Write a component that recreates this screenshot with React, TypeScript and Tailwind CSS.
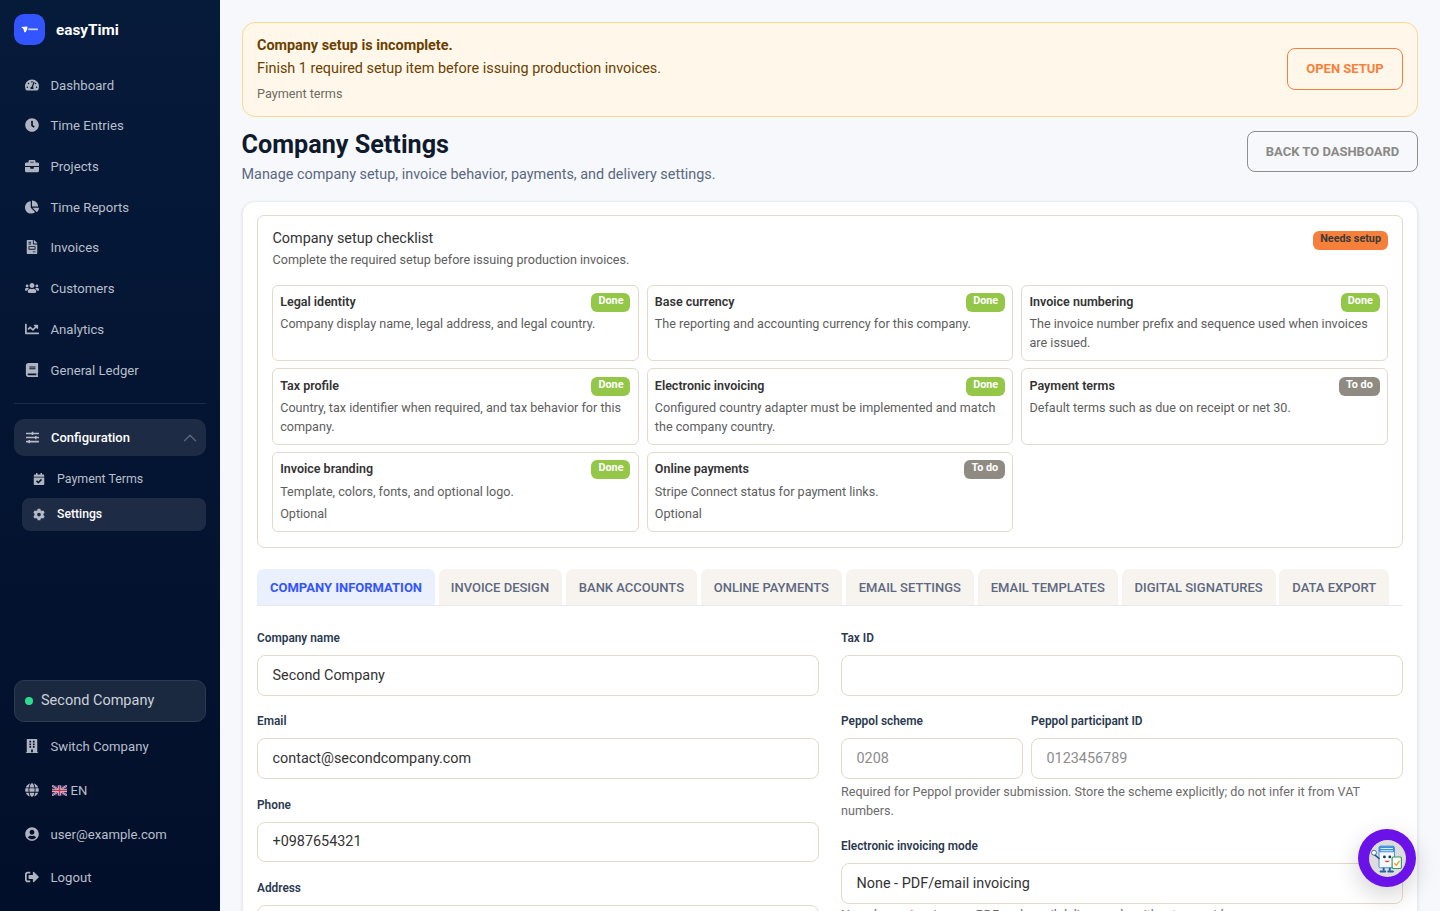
import type { ReactNode } from "react";
import {
  FaBook,
  FaBriefcase,
  FaBuilding,
  FaCalendarCheck,
  FaChartLine,
  FaChartPie,
  FaClock,
  FaCog,
  FaFileInvoice,
  FaGlobe,
  FaSignOutAlt,
  FaSlidersH,
  FaTachometerAlt,
  FaUserCircle,
  FaUsers,
} from "react-icons/fa";
import { ChevronUp } from "lucide-react";

const nav = [
  { label: "Dashboard", icon: <FaTachometerAlt />, h: "h-[40px]" },
  { label: "Time Entries", icon: <FaClock />, h: "h-[40px]" },
  { label: "Projects", icon: <FaBriefcase />, h: "h-[41px]" },
  { label: "Time Reports", icon: <FaChartPie />, h: "h-[41px]" },
  { label: "Invoices", icon: <FaFileInvoice />, h: "h-[40px]" },
  { label: "Customers", icon: <FaUsers />, h: "h-[41px]" },
  { label: "Analytics", icon: <FaChartLine />, h: "h-[41px]" },
  { label: "General Ledger", icon: <FaBook />, h: "h-[41px]" },
];

const checklist = [
  { title: "Legal identity", text: "Company display name, legal address, and legal country.", done: true },
  { title: "Base currency", text: "The reporting and accounting currency for this company.", done: true },
  { title: "Invoice numbering", text: "The invoice number prefix and sequence used when invoices are issued.", done: true },
  { title: "Tax profile", text: "Country, tax identifier when required, and tax behavior for this company.", done: true },
  { title: "Electronic invoicing", text: "Configured country adapter must be implemented and match the company country.", done: true },
  { title: "Payment terms", text: "Default terms such as due on receipt or net 30.", done: false },
  { title: "Invoice branding", text: "Template, colors, fonts, and optional logo.", done: true, optional: true },
  { title: "Online payments", text: "Stripe Connect status for payment links.", done: false, optional: true },
];

const tabs = [
  "Company Information",
  "Invoice Design",
  "Bank Accounts",
  "Online Payments",
  "Email Settings",
  "Email Templates",
  "Digital Signatures",
  "Data Export",
];

function NavRow({ icon, children, h }: { icon: ReactNode; children: ReactNode; h: string }) {
  return (
    <div className={`flex items-center pl-[25px] text-[13.15px] text-[#b9bfca] ${h}`}>
      <span className="w-[14px] mr-[11.5px] flex justify-center text-[14px] shrink-0 text-[#aeb4c0] -mt-[2px]">{icon}</span>
      {children}
    </div>
  );
}

function UkFlag() {
  return (
    <svg viewBox="0 0 60 40" className="w-[15px] h-[11px] mr-[4px] ml-[1px] -mt-[1px] shrink-0">
      <rect width="60" height="40" fill="#2a3a7a" />
      <path d="M0 0L60 40M60 0L0 40" stroke="#d8dbe6" strokeWidth="7" />
      <path d="M0 0L60 40M60 0L0 40" stroke="#c8324a" strokeWidth="3" />
      <path d="M30 0V40M0 20H60" stroke="#d8dbe6" strokeWidth="11" />
      <path d="M30 0V40M0 20H60" stroke="#c8324a" strokeWidth="6" />
    </svg>
  );
}

function Sidebar() {
  return (
    <aside className="w-[220px] shrink-0 h-full flex flex-col bg-gradient-to-b from-[#061a3a] to-[#020f2a] px-[14px]">
      <div className="flex gap-[11px] pt-[14px] h-[66px] items-start">
        <div className="w-[31px] h-[31px] rounded-[10px] bg-[#3355ff] flex items-center justify-center">
          <svg viewBox="0 0 20 8" className="w-[18px] h-[7px]">
            <path d="M0 1L7 .5V3L5 7H3.5L2.5 3.5Z" fill="#fff" />
            <rect x="8" y="2.8" width="11" height="2" fill="#c9d4ff" />
          </svg>
        </div>
        <span className="text-[15.3px] font-bold text-white leading-[33px]">easyTimi</span>
      </div>
      <nav className="-mx-[14px]">
        {nav.map((n) => (
          <NavRow key={n.label} icon={n.icon} h={n.h}>
            {n.label}
          </NavRow>
        ))}
      </nav>
      <div className="border-t border-[#1c2c48] mt-[12px]" />
      <div className="mt-[15px] h-[37px] rounded-[10px] bg-[#1e2b45] flex items-center pl-[12px] pr-[5px] text-[13px] font-medium text-white">
        <FaSlidersH className="text-[13px] text-[#b4bac6] w-[13px] mr-[12px]" />
        <span className="flex-1">Configuration</span>
        <ChevronUp size={22} strokeWidth={1.5} className="text-[#5a6579]" />
      </div>
      <div className="mt-[5px] ml-[8px] flex flex-col">
        <div className="h-[37px] flex items-center pl-[11px] text-[12.4px] text-[#b9bfca]">
          <FaCalendarCheck className="text-[12px] w-[12px] mr-[12px] text-[#aeb4c0] -mt-[2px]" />
          Payment Terms
        </div>
        <div className="h-[33px] rounded-[8px] bg-[#1e2b45] flex items-center pl-[11px] text-[12.2px] font-medium text-white">
          <FaCog className="text-[13px] w-[12px] mr-[12px] text-[#b4bac6]" />
          Settings
        </div>
      </div>
      <div className="flex-1" />
      <div className="h-[42px] rounded-[10px] bg-[#1a2840] border border-[#2d3a50] flex items-center pl-[10px] text-[14.5px] text-[#ccd1da]">
        <span className="w-[8px] h-[8px] rounded-full bg-[#2fdc8e] mr-[8px]" />
        Second Company
      </div>
      <div className="-mx-[14px] mt-[3px] pb-[12px]">
        <NavRow icon={<FaBuilding />} h="h-[44px]">
          Switch Company
        </NavRow>
        <NavRow icon={<FaGlobe />} h="h-[44px]">
          <UkFlag />
          EN
        </NavRow>
        <NavRow icon={<FaUserCircle />} h="h-[44px]">
          user@example.com
        </NavRow>
        <NavRow icon={<FaSignOutAlt />} h="h-[42px]">
          Logout
        </NavRow>
      </div>
    </aside>
  );
}

function StatusBadge({ done }: { done: boolean }) {
  return (
    <span
      className={`h-[19px] rounded-[6px] px-[7px] pt-[1px] text-[10.8px] font-bold text-white leading-[14px] shrink-0 ${
        done ? "bg-[#94c748]" : "bg-[#8f8b82]"
      }`}
    >
      {done ? "Done" : "To do"}
    </span>
  );
}

function Field({
  label,
  value,
  placeholder,
}: {
  label: string;
  value?: string;
  placeholder?: string;
}) {
  return (
    <div>
      <label className="block text-[11.85px] font-semibold text-[#2a3950] leading-[14px] mb-[10px]">{label}</label>
      <input
        readOnly
        value={value ?? ""}
        placeholder={placeholder}
        className="w-full h-[40.5px] rounded-[8px] border border-[#e2dacb] bg-white px-[14.5px] text-[14.4px] text-[#333333] placeholder:text-[#8d8d8d] outline-none"
      />
    </div>
  );
}

function Mascot() {
  return (
    <svg viewBox="0 0 48 48" className="w-full h-full">
      <defs>
        <pattern id="checks" width="3" height="3" patternUnits="userSpaceOnUse">
          <rect width="3" height="3" fill="#ececec" />
          <rect width="1.5" height="1.5" fill="#cdcdcd" />
          <rect x="1.5" y="1.5" width="1.5" height="1.5" fill="#cdcdcd" />
        </pattern>
      </defs>
      <rect width="48" height="48" fill="url(#checks)" />
      <rect x="13" y="8" width="20" height="28" rx="2" fill="#f4f8ff" stroke="#1f6fc4" strokeWidth="1" />
      <rect x="13" y="8" width="20" height="8" rx="2" fill="#3b8fe0" />
      <path d="M15 11H31M15 14H31" stroke="#ffffff" strokeWidth="1.1" />
      <circle cx="20" cy="22" r="1.8" fill="#17365f" />
      <circle cx="27" cy="22" r="1.8" fill="#17365f" />
      <path d="M20 27Q23.5 31 27 27Z" fill="#d6453a" />
      <path d="M13 24L7 19" stroke="#1f4f86" strokeWidth="2" strokeLinecap="round" />
      <circle cx="6.5" cy="16.5" r="3.2" fill="#ffffff" stroke="#1f4f86" strokeWidth="1" />
      <path d="M19 36V40M27 36V40" stroke="#1f5fa8" strokeWidth="2.4" />
      <path d="M15 41H21M25 41H31" stroke="#1f5fa8" strokeWidth="2.6" strokeLinecap="round" />
      <rect x="30" y="22" width="12" height="15" rx="1.5" fill="#ffffff" stroke="#2e9c57" strokeWidth="1.5" />
      <path d="M33 30L35.5 33L39.5 27" fill="none" stroke="#ef9a2c" strokeWidth="1.8" />
    </svg>
  );
}

export default function App() {
  return (
    <div className="h-screen w-full flex overflow-hidden bg-[#f6f8fc] [font-family:Roboto,sans-serif]">
      <Sidebar />
      <main className="flex-1 min-w-0 h-full overflow-hidden px-[22px] pt-[22px]">
        <div className="h-[95px] rounded-[13px] border border-[#f9d98f] bg-[#fff8ea] flex items-start justify-between pl-[14px] pr-[14px]">
          <div className="pt-[13px]">
            <div className="text-[14.4px] font-bold text-[#6b4000] leading-[20px]">Company setup is incomplete.</div>
            <div className="text-[14.4px] text-[#6b4000] leading-[26px]">
              Finish 1 required setup item before issuing production invoices.
            </div>
            <div className="text-[12.65px] text-[#6e6a63] leading-[24px]">Payment terms</div>
          </div>
          <button className="w-[116px] h-[42px] mt-[25px] rounded-[8px] border border-[#f77f3c] text-[13px] font-bold text-[#f77f3c]">
            OPEN SETUP
          </button>
        </div>

        <div className="flex items-start justify-between mt-[14px] h-[70px]">
          <div className="-ml-[0.5px] pt-[1px]">
            <h1 className="text-[25.2px] font-bold text-[#0f1b2d] leading-[26px]">Company Settings</h1>
            <p className="text-[14.4px] text-[#5b6880] leading-[22px] mt-[6px]">
              Manage company setup, invoice behavior, payments, and delivery settings.
            </p>
          </div>
          <button className="w-[171px] h-[41px] rounded-[8px] border border-[#8f8f8a] text-[13px] font-bold text-[#8a8a84]">
            BACK TO DASHBOARD
          </button>
        </div>

        <section className="rounded-t-[13px] border border-[#e9ecf2] bg-white px-[14px] pt-[13px] shadow-sm h-[800px]">
          <div className="h-[333px] rounded-[7px] border border-[#e2dacb] px-[14px] pt-[13px]">
            <div className="flex items-start justify-between">
              <div className="pl-[0.5px]">
                <div className="text-[14.4px] text-[#333333] leading-[20px]">Company setup checklist</div>
                <div className="text-[12.6px] text-[#5e5e5e] leading-[22px]">
                  Complete the required setup before issuing production invoices.
                </div>
              </div>
              <span className="h-[19px] mt-[2px] rounded-[6px] bg-[#f77f3c] px-[7px] text-[10.8px] font-bold text-[#3a3a36] leading-[16px]">
                Needs setup
              </span>
            </div>
            <div className="grid grid-cols-3 grid-rows-[76px_76.4px_80px] gap-x-[8px] gap-y-[7.4px] mt-[14px]">
              {checklist.map((c) => (
                <div key={c.title} className="rounded-[6px] border border-[#e2dacb] pl-[7.2px] pr-[7.2px] pt-[7.2px]">
                  <div className="flex items-start justify-between h-[19px]">
                    <span className="text-[12.5px] font-semibold text-[#333333] leading-[18px]">{c.title}</span>
                    <StatusBadge done={c.done} />
                  </div>
                  <div className="text-[12.6px] text-[#5e5e5e] leading-[19px] mt-[2.2px]">{c.text}</div>
                  {c.optional && <div className="text-[12.6px] text-[#5e5e5e] leading-[19px] mt-[3px]">Optional</div>}
                </div>
              ))}
            </div>
          </div>

          <div className="flex gap-[3.7px] mt-[21px] border-b border-[#e6e9ef] h-[37px]">
            {tabs.map((t, i) => (
              <div
                key={t}
                className={`h-[36px] rounded-t-[7px] flex items-center pt-[2px] pr-[13px] text-[13px] whitespace-nowrap ${
                  i === 0
                    ? "bg-[#ebf0fe] text-[#3355ff] font-bold"
                    : "bg-[#f7f4ef] text-[#5e6880] font-medium"
                } ${i === 1 ? "pl-[12px]" : "pl-[13px]"}`}
              >
                {t.toUpperCase()}
              </div>
            ))}
          </div>

          <div className="grid grid-cols-2 gap-x-[22px] mt-[25px]">
            <div className="flex flex-col gap-[18.83px]">
              <Field label="Company name" value="Second Company" />
              <Field label="Email" value="contact@secondcompany.com" />
              <Field label="Phone" value="+0987654321" />
              <Field label="Address" />
            </div>
            <div>
              <Field label="Tax ID" />
              <div className="grid grid-cols-[182px_1fr] gap-x-[8px] mt-[18.83px]">
                <Field label="Peppol scheme" placeholder="0208" />
                <Field label="Peppol participant ID" placeholder="0123456789" />
              </div>
              <p className="text-[12.6px] text-[#6b6b6b] leading-[19px] mt-[3px]">
                Required for Peppol provider submission. Store the scheme explicitly; do not infer it from VAT numbers.
              </p>
              <div className="mt-[19px]">
                <label className="block text-[11.85px] font-semibold text-[#2a3950] leading-[14px] mb-[10px]">
                  Electronic invoicing mode
                </label>
                <div className="h-[41px] rounded-[8px] border border-[#e2dacb] bg-white px-[14.5px] flex items-center text-[14.4px] text-[#333333]">
                  None - PDF/email invoicing
                </div>
              </div>
              <p className="text-[12.6px] text-[#6b6b6b] leading-[19px] mt-[1px]">
                None keeps invoices as PDF and email delivery only, without a provider.
              </p>
            </div>
          </div>
        </section>
      </main>
      <button className="fixed left-[1358px] top-[829px] w-[58px] h-[58px] rounded-full bg-[#6a12e8] p-[10.5px] shadow-[0_8px_24px_rgba(0,0,0,0.18)]">
        <span className="block w-full h-full rounded-full overflow-hidden">
          <Mascot />
        </span>
      </button>
    </div>
  );
}
